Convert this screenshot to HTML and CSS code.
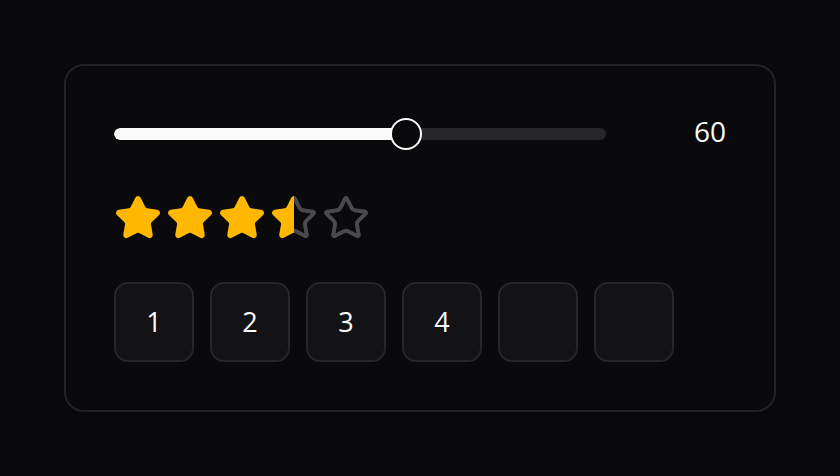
FILE: index.html
```html
<!DOCTYPE html>
<html>
<head>
<meta charset="utf-8">
<link rel="stylesheet" href="styles.css">
</head>
<body>
<div class="card">
  <div class="slider-row">
    <div class="slider">
      <div class="track">
        <div class="fill" style="width: 292px"></div>
      </div>
      <div class="thumb" style="left: 276px"></div>
    </div>
    <div class="value">60</div>
  </div>
  <div class="stars">
    <svg class="star full" viewBox="0 0 24 24"><path d="M11.525 2.295a.53.53 0 0 1 .95 0l2.31 4.679a2.123 2.123 0 0 0 1.595 1.16l5.166.756a.53.53 0 0 1 .294.904l-3.736 3.638a2.123 2.123 0 0 0-.611 1.878l.882 5.14a.53.53 0 0 1-.771.56l-4.618-2.428a2.122 2.122 0 0 0-1.973 0L6.396 21.01a.53.53 0 0 1-.77-.56l.881-5.139a2.122 2.122 0 0 0-.611-1.879L2.16 9.795a.53.53 0 0 1 .294-.906l5.165-.755a2.122 2.122 0 0 0 1.597-1.16z"/></svg>
    <svg class="star full" viewBox="0 0 24 24"><path d="M11.525 2.295a.53.53 0 0 1 .95 0l2.31 4.679a2.123 2.123 0 0 0 1.595 1.16l5.166.756a.53.53 0 0 1 .294.904l-3.736 3.638a2.123 2.123 0 0 0-.611 1.878l.882 5.14a.53.53 0 0 1-.771.56l-4.618-2.428a2.122 2.122 0 0 0-1.973 0L6.396 21.01a.53.53 0 0 1-.77-.56l.881-5.139a2.122 2.122 0 0 0-.611-1.879L2.16 9.795a.53.53 0 0 1 .294-.906l5.165-.755a2.122 2.122 0 0 0 1.597-1.16z"/></svg>
    <svg class="star full" viewBox="0 0 24 24"><path d="M11.525 2.295a.53.53 0 0 1 .95 0l2.31 4.679a2.123 2.123 0 0 0 1.595 1.16l5.166.756a.53.53 0 0 1 .294.904l-3.736 3.638a2.123 2.123 0 0 0-.611 1.878l.882 5.14a.53.53 0 0 1-.771.56l-4.618-2.428a2.122 2.122 0 0 0-1.973 0L6.396 21.01a.53.53 0 0 1-.77-.56l.881-5.139a2.122 2.122 0 0 0-.611-1.879L2.16 9.795a.53.53 0 0 1 .294-.906l5.165-.755a2.122 2.122 0 0 0 1.597-1.16z"/></svg>
    <svg class="star half" viewBox="0 0 24 24">
      <defs><clipPath id="lefthalf"><rect x="0" y="0" width="12" height="24"/></clipPath><clipPath id="righthalf"><rect x="12" y="0" width="12" height="24"/></clipPath></defs>
      <path class="empty-part" clip-path="url(#righthalf)" d="M11.525 2.295a.53.53 0 0 1 .95 0l2.31 4.679a2.123 2.123 0 0 0 1.595 1.16l5.166.756a.53.53 0 0 1 .294.904l-3.736 3.638a2.123 2.123 0 0 0-.611 1.878l.882 5.14a.53.53 0 0 1-.771.56l-4.618-2.428a2.122 2.122 0 0 0-1.973 0L6.396 21.01a.53.53 0 0 1-.77-.56l.881-5.139a2.122 2.122 0 0 0-.611-1.879L2.16 9.795a.53.53 0 0 1 .294-.906l5.165-.755a2.122 2.122 0 0 0 1.597-1.16z"/>
      <path class="full-part" clip-path="url(#lefthalf)" d="M11.525 2.295a.53.53 0 0 1 .95 0l2.31 4.679a2.123 2.123 0 0 0 1.595 1.16l5.166.756a.53.53 0 0 1 .294.904l-3.736 3.638a2.123 2.123 0 0 0-.611 1.878l.882 5.14a.53.53 0 0 1-.771.56l-4.618-2.428a2.122 2.122 0 0 0-1.973 0L6.396 21.01a.53.53 0 0 1-.77-.56l.881-5.139a2.122 2.122 0 0 0-.611-1.879L2.16 9.795a.53.53 0 0 1 .294-.906l5.165-.755a2.122 2.122 0 0 0 1.597-1.16z"/>
    </svg>
    <svg class="star empty" viewBox="0 0 24 24"><path d="M11.525 2.295a.53.53 0 0 1 .95 0l2.31 4.679a2.123 2.123 0 0 0 1.595 1.16l5.166.756a.53.53 0 0 1 .294.904l-3.736 3.638a2.123 2.123 0 0 0-.611 1.878l.882 5.14a.53.53 0 0 1-.771.56l-4.618-2.428a2.122 2.122 0 0 0-1.973 0L6.396 21.01a.53.53 0 0 1-.77-.56l.881-5.139a2.122 2.122 0 0 0-.611-1.879L2.16 9.795a.53.53 0 0 1 .294-.906l5.165-.755a2.122 2.122 0 0 0 1.597-1.16z"/></svg>
  </div>
  <div class="boxes">
    <div class="box">1</div>
    <div class="box">2</div>
    <div class="box">3</div>
    <div class="box">4</div>
    <div class="box"></div>
    <div class="box"></div>
  </div>
</div>
</body>
</html>
```

FILE: styles.css
```css
html, body {
  margin: 0;
  padding: 0;
  background: #09090b;
  width: 840px;
  height: 476px;
  overflow: hidden;
}
body {
  display: flex;
  align-items: center;
  justify-content: center;
  font-family: "Open Sans", "Noto Sans", sans-serif;
  color: #fafafa;
}
.card {
  box-sizing: border-box;
  width: 712px;
  height: 348px;
  border: 2px solid #232326;
  border-radius: 20px;
  background: #0a0a0c;
  padding: 48px;
  display: flex;
  flex-direction: column;
  gap: 40px;
}
.slider-row {
  display: flex;
  align-items: center;
  height: 40px;
}
.slider {
  position: relative;
  flex: 1;
  height: 40px;
  display: flex;
  align-items: center;
}
.track {
  width: 100%;
  height: 12px;
  border-radius: 6px;
  background: #27272a;
  overflow: hidden;
}
.fill {
  height: 100%;
  background: #fafafa;
  border-radius: 6px;
}
.thumb {
  position: absolute;
  top: 4px;
  box-sizing: border-box;
  width: 32px;
  height: 32px;
  border-radius: 50%;
  border: 2px solid #fafafa;
  background: #09090b;
}
.value {
  align-self: flex-start;
  width: 120px;
  text-align: right;
  font-size: 28px;
  line-height: 35px;
}
.stars {
  display: flex;
  gap: 4px;
  height: 48px;
}
.star {
  width: 48px;
  height: 48px;
  fill: none;
  stroke-width: 2;
  stroke-linejoin: round;
  stroke-linecap: round;
}
.star.full path, .star .full-part {
  fill: #ffb700;
  stroke: #ffb700;
}
.star.empty path, .star .empty-part {
  fill: none;
  stroke: #4a4a4e;
}
.boxes {
  display: flex;
  gap: 16px;
}
.box {
  box-sizing: border-box;
  width: 80px;
  height: 80px;
  border: 2px solid #27272a;
  border-radius: 14px;
  background: #131315;
  display: flex;
  align-items: center;
  justify-content: center;
  font-size: 27px;
  line-height: 1;
  padding-bottom: 1px;
}
```
